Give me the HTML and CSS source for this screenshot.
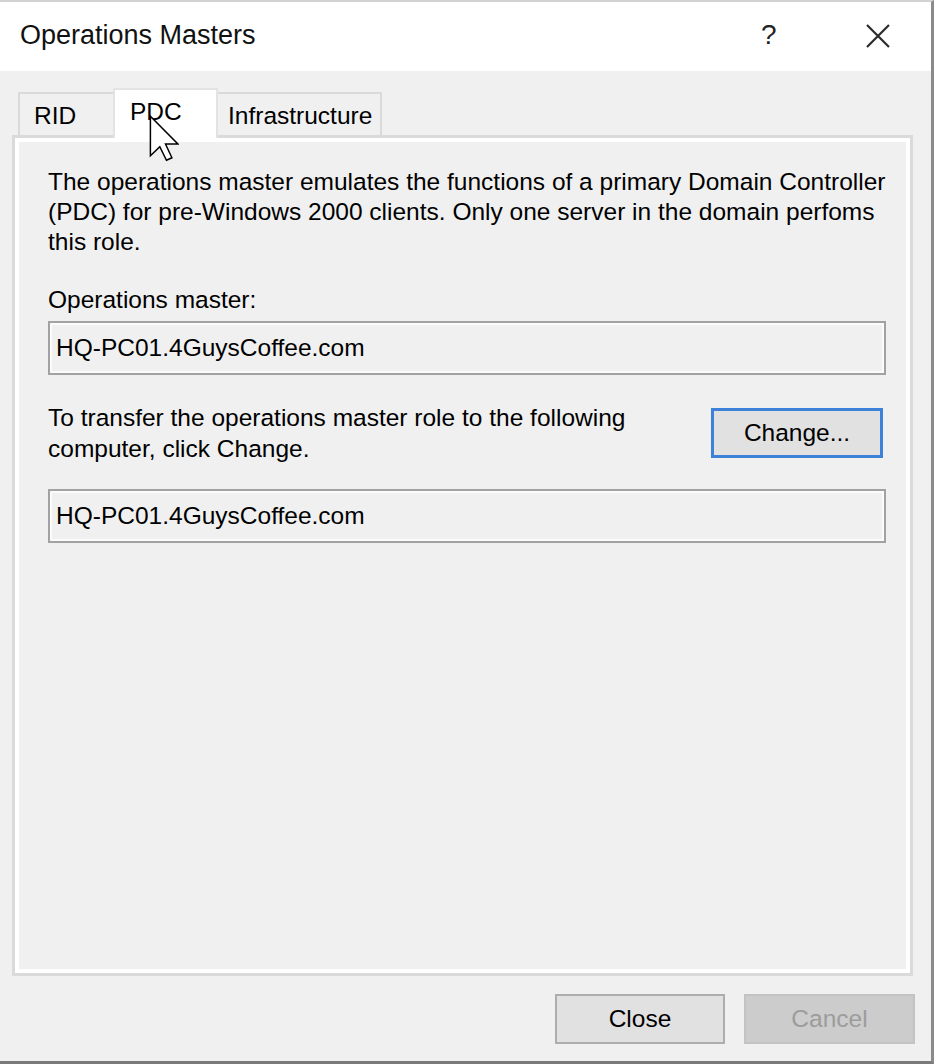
FILE: index.html
```html
<!DOCTYPE html>
<html>
<head>
<meta charset="utf-8">
<title>Operations Masters</title>
<link rel="stylesheet" href="styles.css">
</head>
<body>
<div class="window">
  <div class="titlebar">
    <div class="title">Operations Masters</div>
    <div class="help">?</div>
    <div class="close-x">
      <svg width="26" height="26" viewBox="0 0 26 26"><path d="M2 2 L24 24 M24 2 L2 24" stroke="#2b2b2b" stroke-width="2.2" fill="none"/></svg>
    </div>
  </div>
  <div class="content">
    <div class="tabs">
      <div class="tab tab-rid">RID</div>
      <div class="tab tab-pdc selected">PDC</div>
      <div class="tab tab-infra">Infrastructure</div>
    </div>
    <div class="panel">
      <p class="desc">The operations master emulates the functions of a primary Domain Controller (PDC) for pre-Windows 2000 clients. Only one server in the domain perfoms this role.</p>
      <div class="label">Operations master:</div>
      <div class="field">HQ-PC01.4GuysCoffee.com</div>
      <div class="transfer">
        <div class="transfer-text">To transfer the operations master role to the following computer, click Change.</div>
        <div class="btn btn-change">Change...</div>
      </div>
      <div class="field field-2">HQ-PC01.4GuysCoffee.com</div>
    </div>
    <div class="footer">
      <div class="btn btn-close">Close</div>
      <div class="btn btn-cancel">Cancel</div>
    </div>
  </div>
  <svg class="cursor" width="30" height="47" viewBox="0 0 12 19">
    <path d="M0.5 0.5 L0.5 16.5 L4.3 12.8 L7 18.3 L9.2 17.3 L6.6 11.7 L11.6 11.7 Z" fill="#fff" stroke="#000" stroke-width="0.6" stroke-linejoin="miter"/>
  </svg>
</div>
</body>
</html>
```
FILE: styles.css
```css
* { box-sizing: border-box; }
html, body { margin: 0; padding: 0; }
body {
  width: 934px;
  height: 1064px;
  font-family: "Liberation Sans", Arial, sans-serif;
  font-size: 24.5px;
  color: #000;
  background: #f0f0f0;
  overflow: hidden;
}
.window {
  position: relative;
  width: 934px;
  height: 1064px;
  border-top: 2px solid #d2d2d2;
  border-right: 3px solid #8a8a8a;
  border-bottom: 3px solid #7a7a7a;
  background: #f0f0f0;
  display: flex;
  flex-direction: column;
}
.titlebar {
  height: 69px;
  background: #fff;
  display: flex;
  align-items: center;
  padding-left: 20px;
  flex-shrink: 0;
}
.title {
  font-size: 27px;
  color: #111;
  flex: 1;
  padding-bottom: 2px;
}
.help {
  font-size: 28px;
  color: #222;
  width: 20px;
  margin-right: 84px;
  padding-bottom: 4px;
}
.close-x {
  width: 26px;
  height: 26px;
  margin-right: 40px;
  margin-bottom: 2px;
}
.close-x svg { display: block; }
.content {
  flex: 1;
  display: flex;
  flex-direction: column;
  padding: 17px 18px 0 12px;
}
.tabs {
  display: flex;
  align-items: flex-end;
  height: 47px;
  margin-left: 6px;
  position: relative;
  z-index: 2;
}
.tab {
  height: 43px;
  border: 2px solid #dadada;
  border-bottom: none;
  background: #f0f0f0;
  line-height: 30px;
  padding-top: 7px;
  white-space: nowrap;
}
.tab-rid { width: 95px; padding-left: 14px; border-right: none; }
.tab-pdc { width: 105px; padding-left: 15px; }
.tab-infra { width: 164px; padding-left: 10px; border-left: none; }
.tab.selected {
  height: 50px;
  margin-bottom: -3px;
  background: #fff;
  border-color: #e3e3e3;
}
.panel {
  height: 841px;
  border: 3px solid #dadada;
  box-shadow: inset 0 0 0 4px #fff;
  padding: 29px 24px 0 33px;
  position: relative;
  z-index: 1;
}
.desc {
  margin: 0;
  line-height: 30px;
}
.label {
  margin-top: 28px;
  line-height: 30px;
}
.field {
  margin-top: 6px;
  height: 54px;
  border: 2px solid #a2a2a2;
  box-shadow: inset 0 0 0 2px #fbfbfb;
  background: #f0f0f0;
  padding-left: 6px;
  line-height: 50px;
  white-space: nowrap;
}
.transfer {
  margin-top: 27px;
  display: flex;
  justify-content: space-between;
  align-items: flex-start;
}
.transfer-text {
  width: 640px;
  line-height: 31px;
}
.btn {
  height: 50px;
  text-align: center;
  line-height: 46px;
  white-space: nowrap;
}
.btn-change {
  width: 172px;
  margin-top: 6px;
  margin-right: 3px;
  border: 3px solid #3b82d8;
  background: #e1e1e1;
  line-height: 44px;
}
.field-2 { margin-top: 25px; }
.footer {
  display: flex;
  justify-content: flex-end;
  gap: 19px;
  margin-top: 18px;
  margin-right: -2px;
}
.btn-close {
  width: 170px;
  border: 2px solid #adadad;
  background: #e1e1e1;
}
.btn-cancel {
  width: 171px;
  border: 2px solid #c3c3c3;
  background: #cccccc;
  color: #9c9c9c;
}
.cursor {
  position: absolute;
  left: 149px;
  top: 113px;
  z-index: 5;
}
```
